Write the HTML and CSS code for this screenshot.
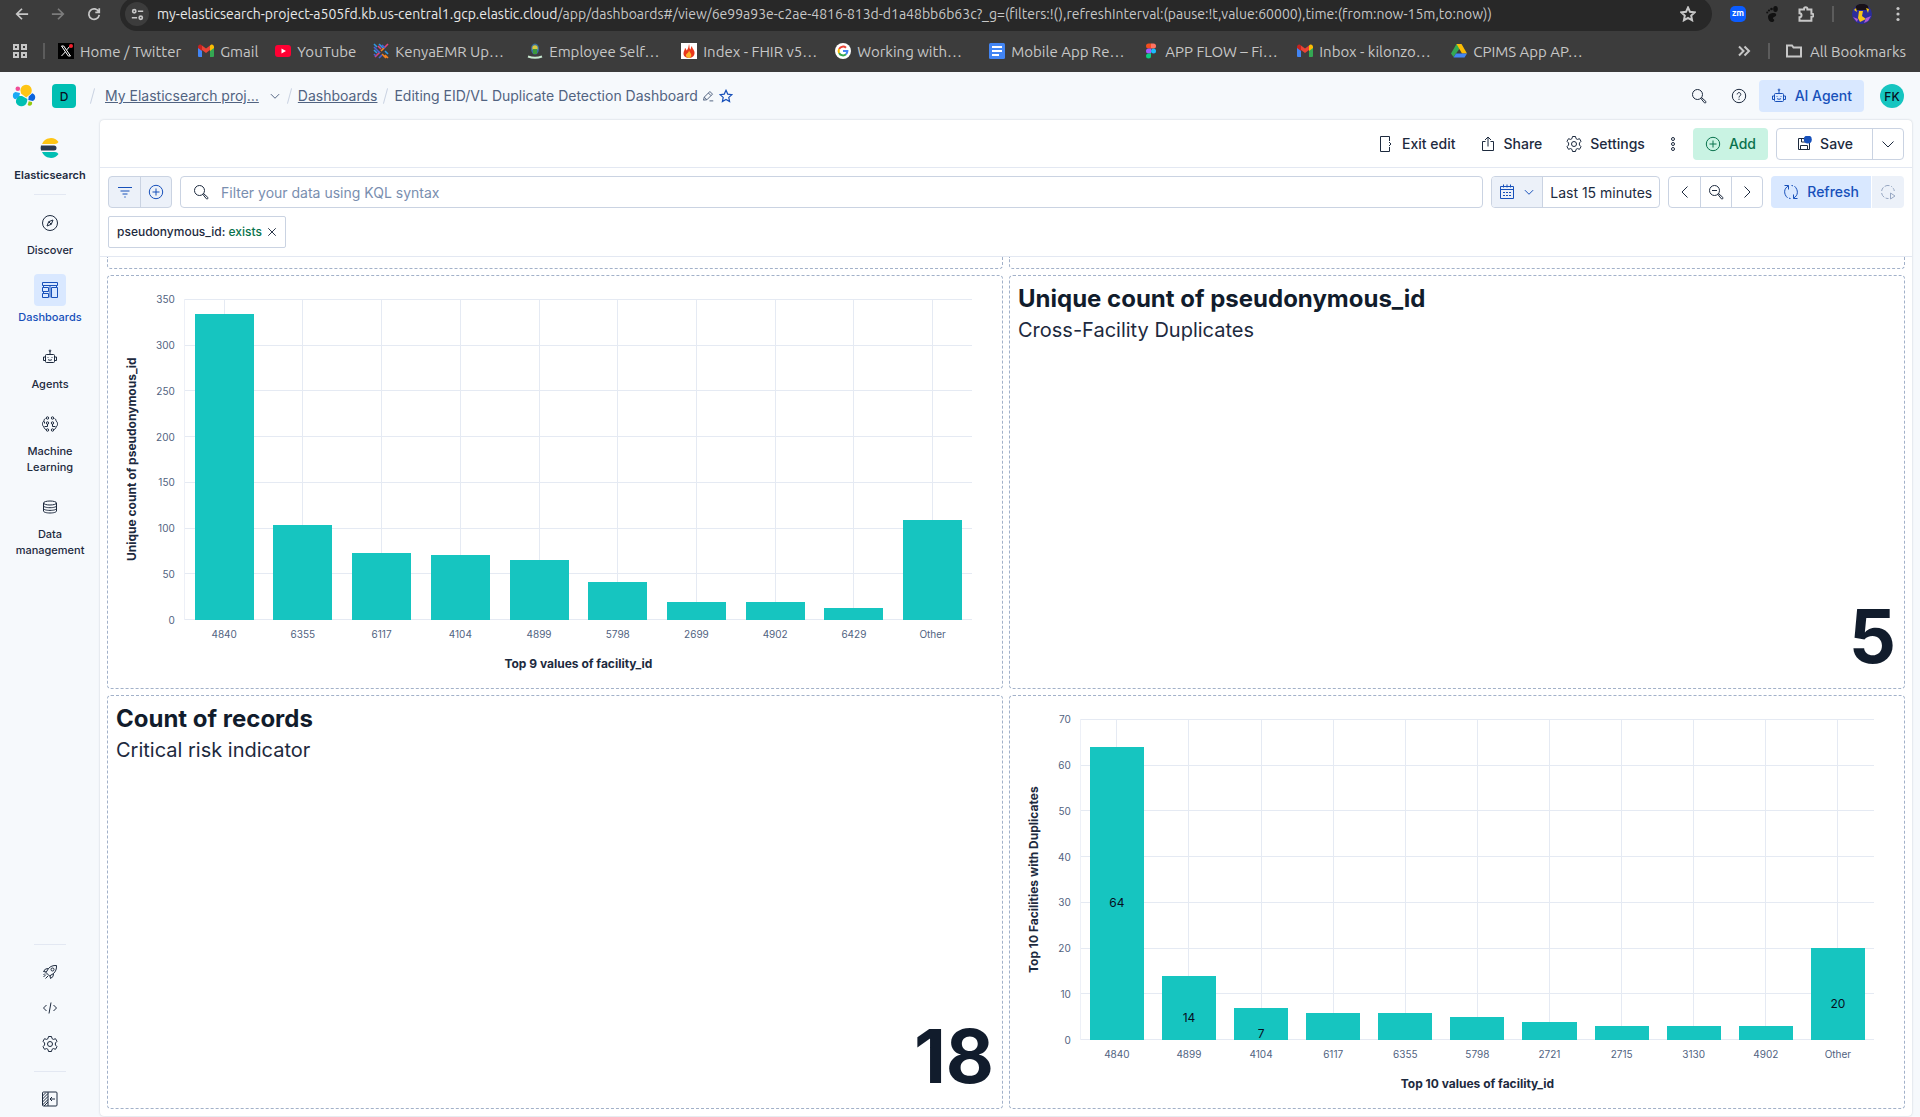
FILE: index.html
```
<!DOCTYPE html>
<html lang="en">

<head>
    <meta charset="UTF-8">
    <title>Editing EID/VL Duplicate Detection Dashboard - Elastic</title>
    <link rel="stylesheet" href="styles.css">
</head>

<body>

    <!-- shared icons -->
    <svg class="sprite" aria-hidden="true">
        <symbol id="i-search" viewBox="0 0 16 16"><circle cx="6.5" cy="6.5" r="5"/><path d="M10 10.6l.8-.8 4 3.6a1 1 0 0 1-1.4 1.4z"/></symbol>
        <symbol id="i-zoomout" viewBox="0 0 16 16"><circle cx="6.5" cy="6.5" r="5"/><path d="M4 6.5h5M10 10.6l.8-.8 4 3.6a1 1 0 0 1-1.4 1.4z"/></symbol>
        <symbol id="i-help" viewBox="0 0 16 16"><circle cx="8" cy="8" r="6.7"/><path d="M6.2 6.4a1.8 1.8 0 1 1 2.8 1.5c-.7.4-1 .7-1 1.6M8 10.7v1.2"/></symbol>
        <symbol id="i-agent" viewBox="0 0 16 16"><path d="M8 2.5V5M4.5 5.5h7a1 1 0 0 1 1 1v6a1 1 0 0 1-1 1h-7a1 1 0 0 1-1-1v-6a1 1 0 0 1 1-1zM3.500 8H1.500v3.500h2M12.500 8h2v3.500h-2M6 10.500c1 1 3 1 4 0"/><circle cx="8" cy="1.800" r=".8"/><path d="M6 8v.8M10 8v.8"/></symbol>
        <symbol id="i-gear" viewBox="0 0 16 16"><circle cx="8" cy="8" r="2.500"/><path d="M6.500.5h3l.5 2.100 1.400.8 2.100-.7 1.500 2.600L13.400 7v2l1.600 1.700-1.500 2.600-2.100-.7-1.400.8-.5 2.100h-3L6 13.400l-1.400-.8-2.100.7L1 10.700 2.600 9V7L1 5.300l1.500-2.600 2.100.7L6 2.600z"/></symbol>
        <symbol id="i-plus" viewBox="0 0 16 16"><circle cx="8" cy="8" r="6.700"/><path d="M8 4.500v7M4.500 8h7"/></symbol>
        <symbol id="i-down" viewBox="0 0 16 16"><path d="M2.500 5.500L8 11l5.500-5.500"/></symbol>
        <symbol id="i-left" viewBox="0 0 16 16"><path d="M10.500 2.500L5 8l5.500 5.500"/></symbol>
        <symbol id="i-right" viewBox="0 0 16 16"><path d="M5.500 2.500L11 8l-5.500 5.500"/></symbol>
        <symbol id="i-star" viewBox="0 0 16 16"><path d="M8 1.500l2 4.300 4.700.6-3.500 3.200.9 4.700L8 12l-4.100 2.300.9-4.700L1.300 6.400 6 5.800z"/></symbol>
        <symbol id="i-gmail" viewBox="0 0 16 16"><path fill="#4285f4" d="M1 14h3V7L0 4v9a1 1 0 0 0 1 1z"/><path fill="#34a853" d="M12 14h3a1 1 0 0 0 1-1V4l-4 3z"/><path fill="#ea4335" d="M4 7V2.500l4 3 4-3V7l-4 3z"/><path fill="#c5221f" d="M0 4v1l4 3V2.500l-1-.7C1.800 1 0 2 0 4z"/><path fill="#fbbc04" d="M16 4v1l-4 3V2.500l1-.7C14.200 1 16 2 16 4z"/></symbol>
    </svg>

    <div class="browser">
        <div class="toolbar">
            <button class="nav-btn" aria-label="Back"><svg class="icon b2" viewBox="0 0 16 16"><path d="M15 8H2.500M8 2L2 8l6 6"/></svg></button>
            <button class="nav-btn dim" aria-label="Forward"><svg class="icon b2" viewBox="0 0 16 16"><path d="M1 8h12.500M8 2l6 6-6 6"/></svg></button>
            <button class="nav-btn" aria-label="Reload"><svg class="icon b2" viewBox="0 0 16 16"><path d="M13.500 5.500A6 6 0 1 0 14 9M14 1.500v4.500H9.500"/></svg></button>
            <div class="omnibox">
                <button class="site-info" aria-label="Site information"><svg class="icon b2" viewBox="0 0 16 16"><circle cx="4" cy="4" r="2"/><path d="M8.500 4H15M1 12h6.500"/><circle cx="12" cy="12" r="2"/></svg></button>
                <p class="url"><b>my-elasticsearch-project-a505fd.kb.us-central1.gcp.elastic.cloud</b>/app/dashboards#/view/6e99a93e-c2ae-4816-813d-d1a48bb6b63c?_g=(filters:!(),refreshInterval:(pause:!t,value:60000),time:(from:now-15m,to:now))</p>
                <button class="bare" aria-label="Bookmark this tab"><svg class="icon b2"><use href="#i-star"/></svg></button>
            </div>
            <div class="extensions">
                <button class="bare" aria-label="Zoom"><span class="zm">zm</span></button>
                <button class="bare" aria-label="GNOME Shell integration"><svg class="fill" viewBox="0 0 16 16" fill="#111"><ellipse cx="11.500" cy="3" rx="2.300" ry="3"/><circle cx="7.500" cy="3" r="1.300"/><circle cx="5" cy="4.500" r="1.100"/><circle cx="3.200" cy="6.500" r="1"/><path d="M12 8c-1-2-8-1-8 3 0 3 2 5 4 5s3-2 1.500-3 .5-2 1.500-2.500S12.500 9 12 8z"/></svg></button>
                <button class="bare" aria-label="Extensions"><svg class="icon b2" viewBox="0 0 16 16"><path d="M1.500 3.500H6V3a1.700 1.700 0 0 1 3.400 0v.5h4v4.300h.6a1.500 1.500 0 0 1 0 3h-.6v4H1.500v-3.500a2 2 0 0 0 0-4z"/></svg></button>
                <span class="sep"></span>
                <button class="bare" aria-label="Profile"><svg class="profile" viewBox="0 0 20 20"><circle cx="10" cy="10" r="10" fill="#2b2d9c"/><path fill="#181018" d="M4 2c3-3 9-3 12 0l1 4H3z"/><path fill="#f5c518" d="M2 6l2-2 1 4zM14 4l3 1-1 4zM7 7h4l-1 5 4 3-6 3-2-4z"/><path fill="#b05bd0" d="M1 13l5 2-1 3zM14 14l5-2-3 5-4 2z"/></svg></button>
                <button class="bare" aria-label="Menu"><svg class="fill" viewBox="0 0 16 16" fill="#c7c7c7"><circle cx="8" cy="2.500" r="1.600"/><circle cx="8" cy="8" r="1.600"/><circle cx="8" cy="13.500" r="1.600"/></svg></button>
            </div>
        </div>

        <nav class="bookmarks">
            <button class="bare" aria-label="Apps"><svg class="icon b2" viewBox="0 0 16 16"><path d="M2 2h4v4H2zM10 2h4v4h-4zM2 10h4v4H2zM10 10h4v4h-4z"/></svg></button>
            <span class="sep"></span>
            <a href="#"><svg class="fill" viewBox="0 0 16 16"><path fill="#000" d="M0 0h16v16H0z"/><path fill="none" stroke="#fff" d="M3.500 3h2.200l6.800 10h-2.200zM12 3L8.700 6.900M7.300 9L3.500 13"/><circle cx="13" cy="3" r="2" fill="#f4212e"/></svg><span>Home / Twitter</span></a>
            <a href="#"><svg class="fill"><use href="#i-gmail"/></svg><span>Gmail</span></a>
            <a href="#"><svg class="fill" viewBox="0 0 16 16"><rect y="2" width="16" height="12" rx="3" fill="#f03"/><path fill="#fff" d="M6.500 5.500v5L11 8z"/></svg><span>YouTube</span></a>
            <a href="#" class="wide"><svg class="fill" viewBox="0 0 16 16" fill="none" stroke-width="1.600"><path stroke="#2e9be6" d="M1 1l3 3M6 1l4 4M1 7l3 3M12 8l3 3"/><path stroke="#e0457b" d="M5 3l3 3M2 14l5-5M11 5l4-4"/><path stroke="#f58220" d="M8 8l3-3M9 11l4 4M12 12l3 3"/><path stroke="#4b5fd6" d="M1 4l6 6M9 2l3 3M1 11l2 2M6 15l3-3"/></svg><span>KenyaEMR Up…</span></a>
            <a href="#" class="wide"><svg class="fill" viewBox="0 0 16 16"><ellipse cx="8" cy="6" rx="4" ry="5.500" fill="#3b6e9e"/><circle cx="8" cy="5" r="2.700" fill="#d8c840"/><path fill="#3c9a3c" d="M6 6h4v5H6z"/><path fill="none" stroke="#c8e8d0" stroke-width="2" d="M1 13.500q7 2.500 14 0"/></svg><span>Employee Self…</span></a>
            <a href="#" class="wide"><svg class="fill" viewBox="0 0 16 16"><path fill="#fff" d="M0 0h16v16H0z"/><path fill="#e8381c" d="M8 1c1 3 0 4 1.500 5.500C10 5 10 4 11 3c0 3 3 4 2.500 7.500S10 15 8 15s-5.500-1-5.500-4.500C2.500 8 4 7 4 5c1 .6 1.300 1.500 1.400 2.500C7.500 6 7.500 3 8 1z"/><path fill="#fbb32b" d="M8 7c.5 2 1 2 2 4 1 2-1 4-2 4s-3.500-1-3-3C5.300 10.500 8 10 8 7z"/></svg><span>Index - FHIR v5…</span></a>
            <a href="#" class="wide"><svg class="fill" viewBox="0 0 16 16"><circle cx="8" cy="8" r="8" fill="#fff"/><g fill="none" stroke-width="2"><path stroke="#ea4335" d="M4.100 6A4.400 4.400 0 0 1 11 4.800"/><path stroke="#fbbc05" d="M4.100 10a4.400 4.400 0 0 1 0-4"/><path stroke="#34a853" d="M11 11.200A4.400 4.400 0 0 1 4.100 10"/><path stroke="#4285f4" d="M8 8h4.400a4.400 4.400 0 0 1-1.400 3.200"/></g></svg><span>Working with…</span></a>
            <a href="#" class="wide"><svg class="fill" viewBox="0 0 16 16"><rect width="16" height="16" rx="1.500" fill="#4285f4"/><path stroke="#fff" stroke-width="1.800" d="M3 4h10M3 8h10M3 12h7"/></svg><span>Mobile App Re…</span></a>
            <a href="#" class="wide"><svg class="fill" viewBox="0 0 16 16"><path fill="#f24e1e" d="M8 .5H5.500a2.500 2.500 0 0 0 0 5H8z"/><path fill="#ff7262" d="M8 .5h2.500a2.500 2.500 0 0 1 0 5H8z"/><path fill="#a259ff" d="M8 5.500H5.500a2.500 2.500 0 0 0 0 5H8z"/><circle cx="10.500" cy="8" r="2.500" fill="#1abcfe"/><path fill="#0acf83" d="M8 10.500H5.500A2.500 2.500 0 1 0 8 13z"/></svg><span>APP FLOW – Fi…</span></a>
            <a href="#" class="wide"><svg class="fill"><use href="#i-gmail"/></svg><span>Inbox - kilonzo…</span></a>
            <a href="#" class="wide"><svg class="fill" viewBox="0 0 16 16"><path fill="#34a853" d="M5.500 1H8l1 4-6.500 9L0 10.500z"/><path fill="#fbbc04" d="M5.500 1h5L16 10.500h-5z"/><path fill="#4285f4" d="M5 10.500h11L13.500 14.500h-11z"/></svg><span>CPIMS App AP…</span></a>
            <div class="bookmarks-end">
                <button class="bare" aria-label="More bookmarks"><svg class="icon b2" viewBox="0 0 16 16"><path d="M3 3.500L7.500 8 3 12.500M8.500 3.500L13 8l-4.500 4.500"/></svg></button>
                <span class="sep"></span>
                <a href="#"><svg class="icon b2" viewBox="0 0 16 16"><path d="M1 13.500v-11h5l1.500 2H15v9z"/></svg><span>All Bookmarks</span></a>
            </div>
        </nav>
    </div>

    <header class="header">
        <a href="#" class="logo" aria-label="Elastic home"><svg viewBox="0 0 24 24"><path fill="#fec514" d="M9 9.500L8.400 6A5.700 5.700 0 0 1 14 .8c3.700 0 6 3 5.700 6.200a6 6 0 0 1-1 2.700l-4.500 3.800z"/><path fill="#00bfb3" d="M4.500 15l1-3 4.500 0 5.400 3-.3 2.500a5.800 5.800 0 0 1-11 1.200C3.800 17.500 4 16 4.500 15z"/><circle cx="5.800" cy="4.700" r="2.300" fill="#f04e98"/><path fill="#1ba9f5" d="M3.500 8l4.500 1-.7 3.300-3.600 3C1.300 14.800.7 13 .9 11.200 1 9.600 2 8.300 3.500 8z"/><path fill="#0b64dd" d="M20.200 9.200c2.200.7 3.200 2.400 3 4.300-.1 1.700-1.100 3-2.500 3.500l-4.400-1 .4-3.600z"/><path fill="#93c90e" d="M16.700 17.200l3.300.8c.7 2.300-.8 3.800-2.400 3.800-.8 0-1.400-.3-1.900-.7z"/></svg></a>
        <span class="avatar square">D</span>
        <nav class="breadcrumbs">
            <i></i>
            <a href="#">My Elasticsearch proj…</a>
            <button class="bare crumb-menu" aria-label="Switch project"><svg class="icon small"><use href="#i-down"/></svg></button>
            <i></i>
            <a href="#">Dashboards</a>
            <i></i>
            <span>Editing EID/VL Duplicate Detection Dashboard</span>
            <div class="title-actions">
                <button class="bare" aria-label="Edit title"><svg class="icon small" viewBox="0 0 16 16"><path d="M2 13.500l1-4L10.500 2 14 5.500 6.500 13zM8.500 4L12 7.500M3 9.500L6.500 13M10 14.500h5"/></svg></button>
                <button class="bare blue" aria-label="Add to favourites"><svg class="icon small-star"><use href="#i-star"/></svg></button>
            </div>
        </nav>
        <div class="header-right">
            <button class="icon-btn" aria-label="Search"><svg class="icon"><use href="#i-search"/></svg></button>
            <button class="icon-btn" aria-label="Help"><svg class="icon"><use href="#i-help"/></svg></button>
            <button class="btn primary"><svg class="icon"><use href="#i-agent"/></svg>AI Agent</button>
            <button class="avatar round" aria-label="Account menu">FK</button>
        </div>
    </header>

    <div class="layout">
        <nav class="sidebar">
            <a href="#" class="side-item solution">
                <span class="side-icon"><svg class="es" viewBox="0 0 20 20"><path fill="#2b394f" d="M1 7.500h13a2.500 2.500 0 0 1 0 5H1a9 9 0 0 1 0-5z"/><path fill="#fec514" d="M2 6a9.500 9.500 0 0 1 16.500-2A4.500 4.500 0 0 1 15 6z"/><path fill="#00bfb3" d="M2 14h13a4.500 4.500 0 0 1 3.500 2A9.500 9.500 0 0 1 2 14z"/></svg></span>
                <span>Elasticsearch</span>
            </a>
            <hr>
            <a href="#" class="side-item">
                <span class="side-icon"><svg class="icon" viewBox="0 0 16 16"><circle cx="8" cy="8" r="7.500"/><path d="M11 5L9.300 9.300 5 11l1.700-4.300zM6.700 6.700l2.600 2.600"/></svg></span>
                <span>Discover</span>
            </a>
            <a href="#" class="side-item active">
                <span class="side-icon"><svg class="icon" viewBox="0 0 16 16"><path d="M.5.500h15v3H.5zM1.500 3.500v2M.5 5.500h6v4h-6zM.5 11.500h6v4h-6zM9.500 5.500h6v10h-6zM8 3.500v12M1.500 9.500v2M14.500 3.500v2"/></svg></span>
                <span>Dashboards</span>
            </a>
            <a href="#" class="side-item">
                <span class="side-icon"><svg class="icon"><use href="#i-agent"/></svg></span>
                <span>Agents</span>
            </a>
            <a href="#" class="side-item">
                <span class="side-icon"><svg class="icon" viewBox="0 0 16 16"><circle cx="5.500" cy="2" r="1.200"/><circle cx="10.500" cy="2" r="1.200"/><circle cx="5.500" cy="7" r="1.200"/><circle cx="10.500" cy="7" r="1.200"/><circle cx="5.500" cy="14" r="1.200"/><circle cx="10.500" cy="14" r="1.200"/><path d="M3.500 2.500C2 3 2 4.500 2 5 .5 6 .5 7 .5 8s.2 2 1.500 3c0 1 .5 2 2 2.500M12.500 2.500C14 3 14 4.500 14 5c1.500 1 1.500 2 1.500 3s-.2 2-1.500 3c0 1-.5 2-2 2.500M5.500 8v2.500H2.500M10.500 8v2.500h3M2.500 5.500v2"/></svg></span>
                <span>Machine Learning</span>
            </a>
            <a href="#" class="side-item">
                <span class="side-icon"><svg class="icon" viewBox="0 0 16 16"><ellipse cx="8" cy="4" rx="6.500" ry="2"/><path d="M1.500 4v8c0 1.200 2.900 2 6.500 2s6.500-.8 6.500-2V4M1.500 6.700c0 1.200 2.900 2 6.500 2s6.500-.8 6.500-2M1.500 9.400c0 1.200 2.900 2 6.500 2s6.500-.8 6.500-2"/></svg></span>
                <span>Data management</span>
            </a>
            <div class="side-footer">
                <hr>
                <a href="#" class="side-icon" aria-label="Getting started"><svg class="icon" viewBox="0 0 16 16"><path d="M14.500 1.500C11 1.300 8.500 2.300 6.500 4.500L4 8.500 7.500 12l4-2.500c2.200-2 3.200-4.500 3-8zM6.500 4.500L3.500 5 1.500 7.500 4.500 8M11.500 9.500l-.5 3-2.500 2-.5-3M4 10.500l-2.500 2.500M6 12l-2.500 2.500M3 9.500L1.500 11"/><circle cx="10.500" cy="5.500" r="1.500"/></svg></a>
                <a href="#" class="side-icon" aria-label="Developer tools"><svg class="icon" viewBox="0 0 16 16"><path d="M4.500 5L1.500 8l3 3M11.500 5l3 3-3 3M9 2.500l-2 11"/></svg></a>
                <a href="#" class="side-icon" aria-label="Admin and settings"><svg class="icon"><use href="#i-gear"/></svg></a>
                <hr>
                <button class="side-icon bare" aria-label="Collapse side navigation"><svg class="icon" viewBox="0 0 16 16"><rect x=".5" y="1" width="14.500" height="14" rx="1"/><path d="M6 1v14M13 8H8M10 6L8 8l2 2M.5 5L4 1.500M.5 8L6 2.500M.5 11L6 5.500M.5 14L6 8.500M2 15l4-4"/></svg></button>
            </div>
        </nav>

        <main class="app">
            <div class="app-menu">
                <button class="btn"><svg class="icon" viewBox="0 0 16 16"><path d="M11.500 5V.5h-9v15h9V11M11 6l2 2-2 2"/></svg>Exit edit</button>
                <button class="btn"><svg class="icon" viewBox="0 0 16 16"><path d="M5.500 5.500h-3v9h11v-9h-3M8 10.500V1M5 4l3-3 3 3"/></svg>Share</button>
                <button class="btn"><svg class="icon"><use href="#i-gear"/></svg>Settings</button>
                <button class="icon-btn slim" aria-label="More"><svg class="icon" viewBox="0 0 16 16"><circle cx="8" cy="3" r="1.500"/><circle cx="8" cy="8" r="1.500"/><circle cx="8" cy="13" r="1.500"/></svg></button>
                <button class="btn success"><svg class="icon"><use href="#i-plus"/></svg>Add</button>
                <div class="group">
                    <button class="btn save"><svg class="icon" viewBox="0 0 16 16"><path d="M9.500 2.500h-7v11h11V7M5.500 2.500v3.500h4M4.500 13.500V9.500h7v4"/><circle cx="11.800" cy="3.500" r="4" class="unsaved"/></svg>Save</button>
                    <button class="cell" aria-label="Save options"><svg class="icon"><use href="#i-down"/></svg></button>
                </div>
            </div>

            <div class="query-bar">
                <div class="query-row">
                    <div class="group tinted">
                        <button class="cell" aria-label="Filter menu"><svg class="icon" viewBox="0 0 16 16"><path d="M1 3.500h14M3.500 7h9M5.500 10h5M7.300 13h1.400"/></svg></button>
                        <button class="cell" aria-label="Add filter"><svg class="icon"><use href="#i-plus"/></svg></button>
                    </div>
                    <label class="search">
                        <svg class="icon"><use href="#i-search"/></svg>
                        <input type="text" placeholder="Filter your data using KQL syntax" aria-label="Filter your data using KQL syntax">
                    </label>
                    <div class="group">
                        <button class="cell quick" aria-label="Date quick select"><svg class="icon" viewBox="0 0 16 16"><path d="M1.500 2.500h13v12h-13zM1.500 5.500h13M4.500 .5v3M8 .5v3M11.500 .5v3M4 8.500h2M7 8.500h2M10 8.500h2M4 11.500h2M7 11.500h2M10 11.500h2"/></svg><svg class="icon small"><use href="#i-down"/></svg></button>
                        <button class="cell date">Last 15 minutes</button>
                    </div>
                    <div class="group">
                        <button class="cell" aria-label="Previous time window"><svg class="icon"><use href="#i-left"/></svg></button>
                        <button class="cell" aria-label="Zoom out"><svg class="icon"><use href="#i-zoomout"/></svg></button>
                        <button class="cell" aria-label="Next time window"><svg class="icon"><use href="#i-right"/></svg></button>
                    </div>
                    <div class="refresh">
                        <button class="btn primary"><svg class="icon" viewBox="0 0 16 16"><path d="M5.500 2C.8 4 .3 10 4.500 13.800M1.500 1.500h4v4M10.500 14c4.700-2 5.200-8 1-11.800M14.500 14.500h-4v-4M8.500 1.500l1.500.3M7.500 14.500L6 14.200"/></svg>Refresh</button>
                        <button class="auto" disabled aria-label="Auto refresh"><svg class="icon" viewBox="0 0 16 16"><path d="M14.300 7A6.500 6.500 0 0 0 11 2.200" stroke-dasharray="3 1.500"/><path d="M9.500 1.600A6.500 6.500 0 0 0 1.600 7M1.600 9a6.500 6.500 0 0 0 6.900 5.500" stroke-dasharray="5 1.500"/><path d="M10.500 9v6l4.500-3z"/></svg></button>
                    </div>
                </div>
                <button class="filter-pill"><b>pseudonymous_id: <em>exists</em></b><svg class="icon tiny" viewBox="0 0 16 16"><path d="M2 2l12 12M14 2L2 14"/></svg></button>
            </div>

            <div class="dashboard">
                <section class="panel cut"></section>
                <section class="panel cut"></section>
                <section class="panel">
                    <div class="chart" id="unique-chart"></div>
                </section>
                <section class="panel metric">
                    <h2>Unique count of pseudonymous_id</h2>
                    <p>Cross-Facility Duplicates</p>
                    <strong>5</strong>
                </section>
                <section class="panel metric">
                    <h2>Count of records</h2>
                    <p>Critical risk indicator</p>
                    <strong>18</strong>
                </section>
                <section class="panel">
                    <div class="chart" id="facility-chart"></div>
                </section>
            </div>
        </main>
    </div>

    <script src="charts.js"></script>
</body>

</html>
```
FILE: styles.css
```
* {
    box-sizing: border-box;
}

body {
    display: flex;
    flex-direction: column;
    height: 100vh;
    margin: 0;
    font-family: Inter, sans-serif;
    font-size: 14px;
    color: #1d2a3e;
    background-color: #f6f9fc;
}

button {
    font: inherit;
    color: inherit;
    cursor: pointer;
}

a {
    color: inherit;
}

.sprite {
    display: none;
}

.icon {
    width: 16px;
    height: 16px;
    flex: none;
    fill: none;
    stroke: currentColor;
}

.icon.b2 {
    stroke-width: 2;
}

.icon.small {
    width: 12px;
    height: 12px;
    stroke-width: 1.3;
}

.icon.small-star {
    width: 14px;
    height: 14px;
    stroke-width: 1.4;
}

.icon.tiny {
    width: 10px;
    height: 10px;
    stroke-width: 1.5;
}

.bare {
    display: flex;
    align-items: center;
    padding: 0;
    border: none;
    background: none;
}

/* browser */

.browser {
    flex: none;
    height: 72px;
    overflow: hidden;
    font-family: Ubuntu, "Noto Sans", sans-serif;
    font-size: 15px;
    color: #c7c7c7;
    background-color: #3c3c3c;
}

.toolbar {
    display: flex;
    align-items: center;
    height: 34px;
    margin-top: -3px;
    padding: 0 14px 0 4px;
}

.nav-btn {
    display: flex;
    justify-content: center;
    align-items: center;
    width: 36px;
    height: 34px;
    padding: 0;
    border: none;
    background: none;
}

.nav-btn .icon {
    width: 14px;
    height: 14px;
}

.dim {
    color: #7c7c7c;
}

.omnibox {
    display: flex;
    align-items: center;
    flex: 1;
    min-width: 0;
    height: 34px;
    margin-left: 8px;
    padding: 0 16px 0 5px;
    border-radius: 17px;
    background-color: #282828;
}

.site-info {
    display: flex;
    justify-content: center;
    align-items: center;
    width: 24px;
    height: 24px;
    padding: 0;
    border: none;
    border-radius: 12px;
    background-color: #3c3c3c;
}

.site-info .icon {
    width: 13px;
    height: 13px;
}

.url {
    flex: 1;
    min-width: 0;
    margin: 0 8px;
    overflow: hidden;
    font-size: 14px;
    white-space: nowrap;
}

.url b {
    font-weight: normal;
    color: #e8e8e8;
}

.extensions {
    display: flex;
    align-items: center;
    gap: 18px;
    margin-left: 18px;
}

.zm {
    width: 16px;
    height: 16px;
    border-radius: 5px;
    font-size: 9px;
    font-weight: bold;
    line-height: 15px;
    color: #fff;
    background-color: #0b5cff;
}

.fill {
    width: 16px;
    height: 16px;
    flex: none;
}

.profile {
    width: 20px;
    height: 20px;
}

.sep {
    width: 2px;
    height: 16px;
    background-color: #5c5c5c;
}

.bookmarks {
    display: flex;
    align-items: center;
    gap: 17px;
    height: 40px;
    padding: 0 14px 0 12px;
    white-space: nowrap;
}

.bookmarks > .sep {
    margin: 0 -4px 0 -2px;
}

.bookmarks a {
    display: flex;
    align-items: center;
    gap: 6px;
    text-decoration: none;
}

.bookmarks .wide {
    width: 137px;
}

.bookmarks-end {
    display: flex;
    align-items: center;
    gap: 16px;
    margin-left: auto;
}

.bookmarks-end a {
    gap: 8px;
}

/* kibana header */

.header {
    display: flex;
    align-items: center;
    flex: none;
    height: 48px;
    padding: 0 16px 0 12px;
    color: #516381;
}

.logo svg {
    display: block;
    width: 24px;
    height: 24px;
}

.avatar {
    display: flex;
    justify-content: center;
    align-items: center;
    width: 24px;
    height: 24px;
    padding: 0;
    border: none;
    font-size: 12px;
    font-weight: 500;
    color: #07101f;
    background-color: #16c5c0;
}

.avatar.square {
    margin-left: 16px;
    border-radius: 4px;
    background-color: #00bfb3;
}

.avatar.round {
    margin-left: 16px;
    border-radius: 12px;
}

.breadcrumbs {
    display: flex;
    align-items: center;
    gap: 8px;
    margin-left: 16px;
    line-height: 20px;
    white-space: nowrap;
}

.breadcrumbs i {
    width: 1px;
    height: 16px;
    background-color: #cad3e2;
    transform: rotate(15deg);
}

.breadcrumbs > a:first-of-type {
    margin-left: 4px;
}

.crumb-menu {
    margin-left: 2px;
}

.title-actions {
    display: flex;
    align-items: center;
    gap: 5px;
    margin-left: -4px;
}

.blue {
    color: #1750ba;
}

.header-right {
    display: flex;
    align-items: center;
    margin-left: auto;
    color: #1d2a3e;
}

.icon-btn {
    display: flex;
    justify-content: center;
    align-items: center;
    width: 40px;
    height: 32px;
    padding: 0;
    border: none;
    background: none;
}

.icon-btn.slim {
    width: 32px;
}

.btn {
    display: flex;
    justify-content: center;
    align-items: center;
    gap: 8px;
    height: 32px;
    padding: 0 12px;
    border: none;
    border-radius: 4px;
    font-weight: 500;
    line-height: 20px;
    background: none;
}

.btn.primary {
    color: #1750ba;
    background-color: #d9e8ff;
}

.btn.success {
    margin: 0 8px 0 4px;
    color: #09724d;
    background-color: #c9f3e3;
}

/* side navigation */

.layout {
    display: flex;
    flex: 1;
    min-height: 0;
    padding: 0 8px 1px 0;
}

.sidebar {
    display: flex;
    flex-direction: column;
    align-items: center;
    flex: none;
    width: 100px;
    padding: 12px 0 1px;
}

.sidebar hr {
    width: 32px;
    height: 1px;
    margin: 11px 0 12px;
    border: none;
    background-color: #e3e8f2;
}

.side-item {
    display: flex;
    flex-direction: column;
    align-items: center;
    gap: 3px;
    width: 84px;
    margin-bottom: 16px;
    font-size: 11px;
    font-weight: 500;
    line-height: 16px;
    text-align: center;
    text-decoration: none;
}

.side-item.solution {
    margin-bottom: 0;
    font-weight: 600;
}

.side-icon {
    display: flex;
    justify-content: center;
    align-items: center;
    width: 32px;
    height: 32px;
    border-radius: 4px;
}

.active {
    color: #1750ba;
}

.active .side-icon {
    background-color: #d9e8ff;
}

.es {
    width: 20px;
    height: 20px;
}

.side-footer {
    display: flex;
    flex-direction: column;
    align-items: center;
    gap: 4px;
    margin-top: auto;
}

.side-footer hr {
    margin: 7px 0;
}

/* application */

.app {
    display: flex;
    flex-direction: column;
    flex: 1;
    min-width: 0;
    border-radius: 4px;
    background-color: #fff;
    box-shadow: 0 0 2px rgba(43, 57, 79, 0.25);
}

.app-menu {
    display: flex;
    justify-content: flex-end;
    align-items: center;
    flex: none;
    height: 48px;
    padding: 0 8px;
    border-bottom: 1px solid #e3e8f2;
}

.cell {
    display: flex;
    justify-content: center;
    align-items: center;
    gap: 8px;
    min-width: 31px;
    padding: 0;
    border: none;
    background: none;
}

.group {
    display: flex;
    height: 32px;
    border: 1px solid #cad3e2;
    border-radius: 4px;
    overflow: hidden;
}

.group button {
    height: 30px;
    border-radius: 0;
}

.group button + button {
    border-left: 1px solid #cad3e2;
}

.save {
    width: 95px;
}

.unsaved {
    fill: #1750ba;
    stroke: none;
}

.tinted,
.quick {
    color: #1750ba;
    background-color: #ecf1f9;
}

.quick {
    width: 50px;
}

.date {
    padding: 0 7px;
}

.query-bar {
    flex: none;
    padding: 8px;
    border-bottom: 1px solid #e3e8f2;
}

.query-row {
    display: flex;
    gap: 8px;
    margin-bottom: 8px;
}

.search {
    display: flex;
    align-items: center;
    gap: 12px;
    flex: 1;
    height: 32px;
    padding: 0 12px;
    border: 1px solid #cad3e2;
    border-radius: 4px;
}

.search input {
    flex: 1;
    padding: 0;
    border: none;
    outline: none;
    font: inherit;
    background: none;
}

.search input::placeholder {
    color: #798eaf;
}

.refresh {
    display: flex;
    gap: 1px;
}

.refresh .btn {
    border-radius: 4px 0 0 4px;
}

.auto {
    display: flex;
    justify-content: center;
    align-items: center;
    width: 32px;
    padding: 0;
    border: none;
    border-radius: 0 4px 4px 0;
    color: #98a8c3;
    background-color: #ecf1f9;
}

.filter-pill {
    display: flex;
    align-items: center;
    gap: 5px;
    height: 32px;
    padding: 0 8px;
    border: 1px solid #cad3e2;
    border-radius: 2px;
    font-size: 12px;
    line-height: 16px;
    background: none;
}

.filter-pill b {
    font-weight: 500;
}

.filter-pill em {
    font-style: normal;
    color: #09724d;
}

.dashboard {
    display: grid;
    grid-template-columns: 1fr 1fr;
    grid-template-rows: 12px 1fr 1fr;
    gap: 6px;
    flex: 1;
    min-height: 0;
    padding: 0 7px 7px;
}

.panel {
    min-width: 0;
    border: 1px dashed #a2b1c9;
    border-radius: 4px;
}

.panel.cut {
    border-top: none;
    border-radius: 0 0 4px 4px;
}

.metric {
    display: flex;
    flex-direction: column;
    padding: 7px 8px 8px;
    color: #111c2c;
}

.metric h2 {
    margin: 0;
    font-size: 24px;
    line-height: 31px;
}

.metric p {
    margin: 0;
    font-size: 20px;
    line-height: 32px;
    color: #1d2a3e;
}

.metric strong {
    margin-top: auto;
    text-align: right;
    font-size: 74px;
    line-height: 88px;
}

/* charts */

.chart {
    display: grid;
    grid-template-columns: 17px auto 1fr;
    grid-template-rows: 1fr 28px 31px;
    height: 100%;
    padding: 23px 30px 9px 15px;
    font-size: 12px;
}

.y-title {
    display: flex;
    justify-content: center;
    align-items: center;
    writing-mode: vertical-rl;
    transform: rotate(180deg);
    font-weight: 700;
}

.y-ticks {
    display: flex;
    flex-direction: column;
    justify-content: space-between;
    margin: 0 10px 0 16px;
    font-size: 10px;
    line-height: 0;
    text-align: right;
    color: #516381;
}

.y-ticks span {
    height: 0;
}

.plot {
    display: grid;
    box-shadow: -1px 0 #edf0f7;
}

.plot > div {
    grid-area: 1 / 1;
}

.h-lines {
    display: flex;
    flex-direction: column;
    justify-content: space-between;
}

.h-lines i {
    height: 1px;
    background-color: #e5eaf3;
}

.columns {
    display: flex;
    min-height: 0;
}

.column {
    display: flex;
    flex: 1;
    justify-content: center;
    align-items: flex-end;
    background: linear-gradient(#e5eaf3, #e5eaf3) center / 1px 100% no-repeat;
}

.bar {
    display: flex;
    justify-content: center;
    align-items: center;
    width: 75%;
    padding-top: 20px;
    line-height: 12px;
    color: #07101f;
    background-color: #16c5c0;
}

.bar:empty {
    padding: 0;
}

.x-labels {
    display: flex;
    grid-column: 3;
    font-size: 10px;
    line-height: 28px;
    text-align: center;
    color: #516381;
}

.x-labels span {
    flex: 1;
}

.x-title {
    grid-column: 3;
    font-weight: 700;
    line-height: 31px;
    text-align: center;
}
```
FILE: charts.js
```
const charts = [
    {
        id: "unique-chart",
        xTitle: "Top 9 values of facility_id",
        yTitle: "Unique count of pseudonymous_id",
        max: 350,
        step: 50,
        labelFrom: Infinity,
        data: [["4840", 334], ["6355", 104], ["6117", 73], ["4104", 71], ["4899", 65], ["5798", 41], ["2699", 20], ["4902", 20], ["6429", 13], ["Other", 109]]
    },
    {
        id: "facility-chart",
        xTitle: "Top 10 values of facility_id",
        yTitle: "Top 10 Facilities with Duplicates",
        max: 70,
        step: 10,
        labelFrom: 7,
        data: [["4840", 64], ["4899", 14], ["4104", 7], ["6117", 6], ["6355", 6], ["5798", 5], ["2721", 4], ["2715", 3], ["3130", 3], ["4902", 3], ["Other", 20]]
    }
];

function drawChart(chart) {
    const ticks = [];
    for (let value = chart.max; value >= 0; value -= chart.step) {
        ticks.push(value);
    }

    const columns = chart.data.map(([name, value]) => {
        const label = value >= chart.labelFrom ? value : "";
        return `<div class="column"><div class="bar" style="height: ${value / chart.max * 100}%">${label}</div></div>`;
    });

    document.getElementById(chart.id).innerHTML = `
        <div class="y-title">${chart.yTitle}</div>
        <div class="y-ticks">${ticks.map((tick) => `<span>${tick}</span>`).join("")}</div>
        <div class="plot">
            <div class="h-lines">${ticks.map(() => "<i></i>").join("")}</div>
            <div class="columns">${columns.join("")}</div>
        </div>
        <div class="x-labels">${chart.data.map(([name]) => `<span>${name}</span>`).join("")}</div>
        <div class="x-title">${chart.xTitle}</div>`;
}

charts.forEach(drawChart);
```
